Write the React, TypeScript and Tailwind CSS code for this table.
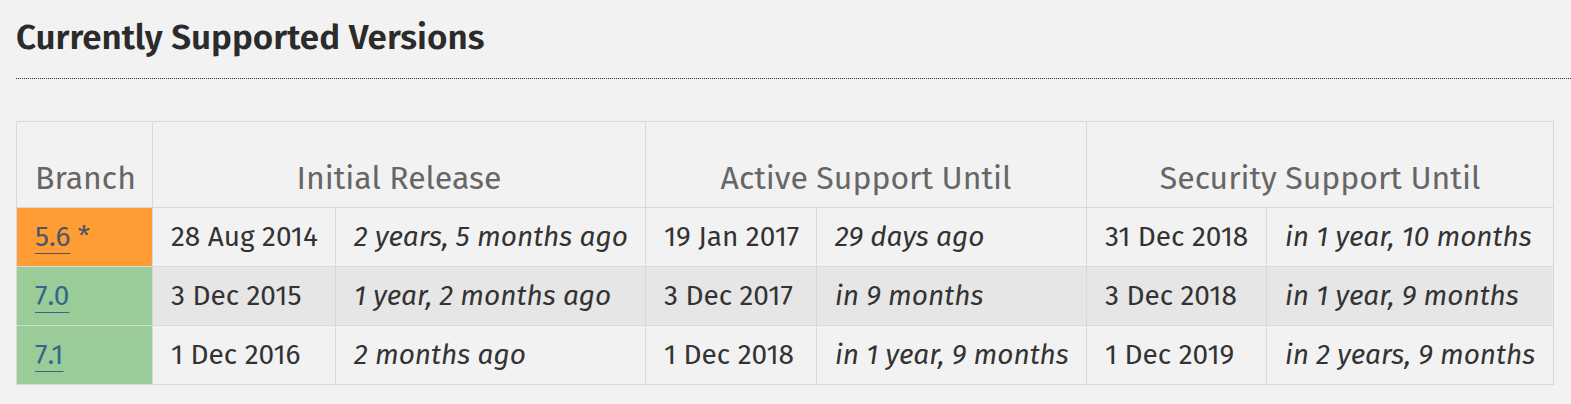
const versions = [
  {
    branch: "5.6",
    note: " *",
    rowBg: "bg-[#f2f2f2]",
    branchBg: "bg-[#ff9c33]",
    link: "text-[#4b5768] decoration-[#4b5768]",
    initial: ["28 Aug 2014", "2 years, 5 months ago"],
    active: ["19 Jan 2017", "29 days ago"],
    security: ["31 Dec 2018", "in 1 year, 10 months"],
  },
  {
    branch: "7.0",
    note: "",
    rowBg: "bg-[#e6e6e6]",
    branchBg: "bg-[#99cc99]",
    link: "text-[#33668a] decoration-[#33668a]",
    initial: ["3 Dec 2015", "1 year, 2 months ago"],
    active: ["3 Dec 2017", "in 9 months"],
    security: ["3 Dec 2018", "in 1 year, 9 months"],
  },
  {
    branch: "7.1",
    note: "",
    rowBg: "bg-[#f2f2f2]",
    branchBg: "bg-[#99cc99]",
    link: "text-[#33668a] decoration-[#33668a]",
    initial: ["1 Dec 2016", "2 months ago"],
    active: ["1 Dec 2018", "in 1 year, 9 months"],
    security: ["1 Dec 2019", "in 2 years, 9 months"],
  },
];

const cell = "border border-[#d9d9d9] h-[59px] px-[18px] align-middle whitespace-nowrap";
const head = "border border-[#d9d9d9] align-bottom pb-[5px] font-normal leading-[48px]";

export default function App() {
  return (
    <div
      className="min-h-screen bg-[#f2f2f2] pl-4 text-[#333]"
      style={{ fontFamily: '"Fira Sans", "Open Sans", "Noto Sans", sans-serif' }}
    >
      <h2 className="pt-[17px] pb-[21px] text-[35px] leading-[40px] font-semibold text-[#2b2b2b] border-b border-dotted border-[#333]">
        Currently Supported Versions
      </h2>

      <table className="mt-[42px] table-fixed border-collapse w-[1537px] text-[28px] leading-[42px]">
        <colgroup>
          <col className="w-[136px]" />
          <col className="w-[183px]" />
          <col className="w-[310px]" />
          <col className="w-[171px]" />
          <col className="w-[270px]" />
          <col className="w-[180px]" />
          <col className="w-[287px]" />
        </colgroup>
        <thead>
          <tr className="text-[#666] text-[32px]">
            <th className={`${head} h-[86px] px-[18px] text-left`}>Branch</th>
            <th colSpan={2} className={head}>
              Initial Release
            </th>
            <th colSpan={2} className={head}>
              Active Support Until
            </th>
            <th colSpan={2} className={head}>
              Security Support Until
            </th>
          </tr>
        </thead>
        <tbody>
          {versions.map((v) => (
            <tr key={v.branch} className={v.rowBg}>
              <td className={`${cell} ${v.branchBg}`}>
                <a href="#" className={`underline underline-offset-[7px] decoration-1 ${v.link}`}>
                  {v.branch}
                </a>
                {v.note && <span className="text-[#4b5768]">{v.note}</span>}
              </td>
              <td className={cell}>{v.initial[0]}</td>
              <td className={`${cell} italic`}>{v.initial[1]}</td>
              <td className={cell}>{v.active[0]}</td>
              <td className={`${cell} italic`}>{v.active[1]}</td>
              <td className={cell}>{v.security[0]}</td>
              <td className={`${cell} italic`}>{v.security[1]}</td>
            </tr>
          ))}
        </tbody>
      </table>
    </div>
  );
}
